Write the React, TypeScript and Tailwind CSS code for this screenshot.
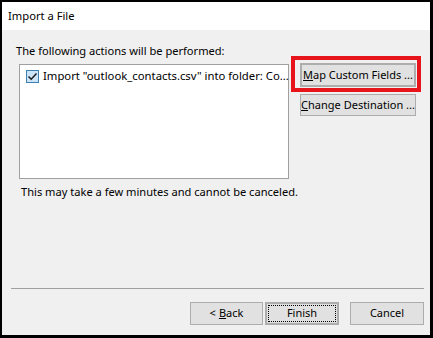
import React from 'react';

const font = { fontFamily: '"Noto Sans", "Open Sans", sans-serif' };

const Btn = ({
  children,
  className = '',
}: {
  children: React.ReactNode;
  className?: string;
}) => (
  <div
    className={`flex items-center justify-center whitespace-nowrap bg-[#e1e1e1] border border-[#adadad] text-[11px] text-black ${className}`}
  >
    {children}
  </div>
);

export default function App() {
  return (
    <div
      className="w-[433px] h-[338px] bg-black pt-[2px] pl-[2px] pr-[3px] pb-[3px]"
      style={font}
    >
      <div className="flex flex-col h-full">
        <div className="h-[28px] bg-white flex items-center pl-[6px] text-[11.2px] text-black">
          Import a File
        </div>

        <div className="flex-1 bg-[#f0f0f0] flex flex-col">
          <div className="flex">
            <div className="pl-[14px] pt-[13px] w-[289px] text-[11.1px]">
              <div className="leading-[16px] text-black whitespace-nowrap">
                The following actions will be performed:
              </div>
              <div className="ml-[3px] mt-[5px] w-[270px] h-[115px] bg-white border border-[#a0a0a0] pt-[3px] pl-[6px]">
                <div className="flex items-center gap-[4px] text-[11.3px] leading-[16px] text-black whitespace-nowrap">
                  <div className="w-[13px] h-[13px] border border-[#3c7fb1] bg-[#cce4f7] flex items-center justify-center">
                    <svg width="11" height="11" viewBox="0 0 11 11">
                      <path
                        d="M1.5 5.5 L4.2 8.2 L9.5 2.5"
                        fill="none"
                        stroke="#1a1a1a"
                        strokeWidth="1.5"
                      />
                    </svg>
                  </div>
                  <span>Import "outlook_contacts.csv" into folder: Co...</span>
                </div>
              </div>
              <div className="ml-[5px] mt-[5px] leading-[16px] text-black whitespace-nowrap">
                This may take a few minutes and cannot be canceled.
              </div>
            </div>

            <div className="pt-[26px]">
              <div className="border-[4px] border-[#e8141b] pl-[5px] pr-[1px] pt-[3px] pb-[1px] w-[130px]">
                <Btn className="h-[24px] w-[116px] border-[2px] border-[#0078d7]">
                  <span>
                    <u>M</u>ap Custom Fields ...
                  </span>
                </Btn>
              </div>
              <Btn className="ml-[9px] mt-[2px] h-[22px] w-[116px]">
                <span>
                  <u>C</u>hange Destination ...
                </span>
              </Btn>
            </div>
          </div>

          <div className="mt-auto pl-[9px] pr-[6px]">
            <div className="h-px bg-[#a0a0a0]" />
            <div className="flex justify-end pt-[13px] pb-[10px]">
              <Btn className="w-[73px] h-[23px]">
                &lt; <u className="ml-[3px]">B</u>ack
              </Btn>
              <Btn className="ml-[2px] w-[74px] h-[23px] border-[2px] border-[#0078d7]">
                <div className="w-[68px] h-[17px] border border-dotted border-black flex items-center justify-center">
                  Finish
                </div>
              </Btn>
              <Btn className="ml-[11px] w-[74px] h-[23px]">Cancel</Btn>
            </div>
          </div>
        </div>
      </div>
    </div>
  );
}
